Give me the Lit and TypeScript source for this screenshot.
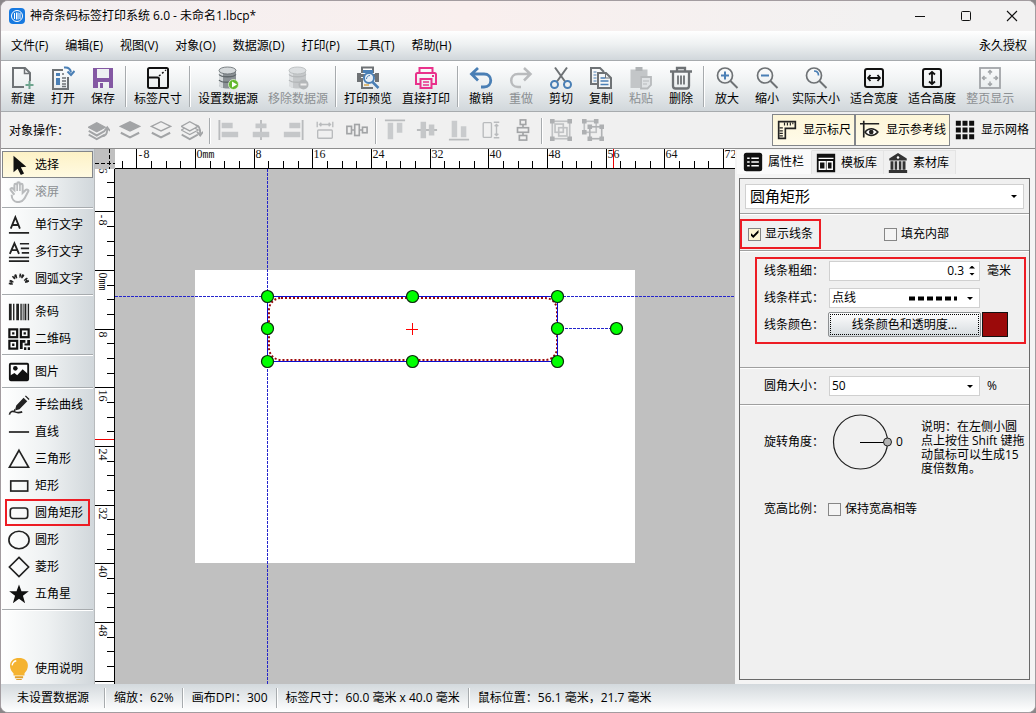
import { LitElement, html, svg, css, nothing } from "lit";
import { customElement, property } from "lit/decorators.js";
import { classMap } from "lit/directives/class-map.js";

/* Icons: each is drawn on a 24 x 24 grid. */
const G = "#6e7275";
const B = "#4a7fb5";
const L = "#b9bbbd";
const M = "#a2a4a6";

const cylinder = (a: string, b: string, c: string) => svg`
  <path d="M3 4v15c0 2 4 3.500 8.500 3.500S20 21 20 19V4z" fill=${b}/>
  <path d="M3 4v15c0 1.500 2 2.500 4 3V6z" fill=${a}/>
  <path d="M3 8.500c2 3 15 3 17 0M3 14c2 3 15 3 17 0" fill="none" stroke=${c} stroke-width="1.300"/>
  <ellipse cx="11.500" cy="4.500" rx="8.500" ry="3.500" fill=${a} stroke=${c} stroke-width=".8"/>`;

const layer = (y: number, fill: string) => svg`<path d="M1.500 ${y}L12 ${y - 5}L22.500 ${y}L12 ${y + 5}Z" fill=${fill} stroke=${M} stroke-width="1.400"/>`;
const chevron = (y: number) => svg`<path d="M2 ${y}L12 ${y + 5}L22 ${y}" fill="none" stroke=${M} stroke-width="2.200"/>`;

const icons: Record<string, unknown> = {
  new: svg`<g fill="none" stroke=${G} stroke-width="2"><path d="M13 21H2V2h12l5 5v8"/><path d="M13.500 2.500v5h5" stroke-width="1.500"/></g><path d="M18.500 15v8M14.500 19h8" stroke="#6fa58f" stroke-width="2"/>`,
  open: svg`<path d="M12 4H2v19h15V11" fill="none" stroke=${G} stroke-width="2"/><path d="M5 7h4v3H5zM5 12h4v7H5z" fill=${B}/><path d="M11 8h2M11 12h4M11 15h4M11 18h4M11 20.500h4" stroke=${G} stroke-width="1.500"/><path d="M13 1.500c4-.5 6.500 1.500 7 5" fill="none" stroke=${B} stroke-width="2"/><path d="M16.500 5.500L20 9l3.500-4" fill="none" stroke=${B} stroke-width="2"/>`,
  save: svg`<path d="M2 2h20v20H2z" fill="#8458a3"/><path d="M6 3h12v9H6z" fill="#eef0f2"/><path d="M7 16h11v6H7z" fill="#eef0f2"/><path d="M9 17h3v5H9z" fill="#8458a3"/>`,
  size: svg`<g fill="none" stroke="#111"><rect x="2" y="2" width="20" height="20" rx="1.500" stroke-width="2"/><path d="M2 11.500h9.500c1 0 1.500.5 1.500 1.500v9" stroke-width="2"/><path d="M13 10l7-6" stroke-width="1.500" stroke-dasharray="2 2"/></g>`,
  db: svg`${cylinder("#d5d9db", "#8b9195", "#5f6669")}<circle cx="17.500" cy="18.500" r="5" fill="#62b72c" stroke="#e7f6dc" stroke-width=".8"/><path d="M16 15.500l5 3-5 3z" fill="#fff"/>`,
  dbOff: svg`${cylinder("#dcdfe1", "#c5c8ca", "#b4b7b9")}<circle cx="17.500" cy="18.500" r="5" fill="#b4b7b9"/><path d="M14.500 18.500h6" stroke="#eee" stroke-width="2"/>`,
  preview: svg`<path d="M6 7V1.500h11V7" fill="#fff" stroke=${G} stroke-width="2"/><path d="M7 4h10v3H7z" fill=${B}/><path d="M1 7h4v9H1zM19 7h4v9h-4zM5 8h14v3H5z" fill=${G}/><path d="M6 12v10h11" fill="none" stroke=${G} stroke-width="2"/><path d="M8 19h5" stroke="#d8a74e" stroke-width="1.500"/><circle cx="13" cy="12" r="5" fill="#e7eef5" stroke=${B} stroke-width="2"/><path d="M10.500 13c0-2 1.500-3.500 3.500-3.500" fill="none" stroke=${B}/><path d="M16.500 16l6 6" stroke=${B} stroke-width="2.500"/>`,
  print: svg`<g fill="none" stroke="#e9318b" stroke-width="2"><path d="M5.500 6V2h13v4M6 18H2V8.500C2 7.500 2.500 7 3.500 7h17c1 0 1.500.5 1.500 1.500V18h-4"/><path d="M6.500 13h11v9h-11z"/><path d="M9 16h6M9 19h6" stroke-width="1.500"/><path d="M18 10h2"/></g>`,
  undo: svg`<path d="M9 2L2.500 8L9 14.500M3 8h12c9 0 9 13 0 13h-3" fill="none" stroke=${B} stroke-width="2.800"/>`,
  redo: svg`<path d="M15 2l6.500 6L15 14.500M21 8H9c-9 0-9 13 0 13h3" fill="none" stroke=${L} stroke-width="2.500"/>`,
  cut: svg`<path d="M6 1.500l10 14M18 1.500L8 15.500" stroke=${G} stroke-width="2"/><g fill="none" stroke=${B} stroke-width="2"><circle cx="5.500" cy="18.500" r="3.500"/><circle cx="18.500" cy="18.500" r="3.500"/></g>`,
  copy: svg`<path d="M8 18H2V2h9l4 4" fill="none" stroke=${G} stroke-width="2"/><path d="M4.500 6h3M4.500 9h3M4.500 12h3M4.500 15h3" stroke=${B}/><path d="M9 7h8l5 5v10H9z" fill="#f4f6f7" stroke=${G} stroke-width="2"/><path d="M11.500 12h5M11.500 15h8M11.500 18.500h8" stroke=${B} stroke-width="1.500"/><path d="M16.500 7v5H22" stroke=${G} fill="none"/>`,
  paste: svg`<path d="M1.500 3.500h17V10H11v12H1.500z" fill="#c3c6c8"/><path d="M6.500 1h7v4h-7z" fill="#b0b3b5"/><path d="M12 11h10v8l-3.500 3.500H12z" fill="#dfe2e4" stroke="#b7babc" stroke-width="1.800"/><path d="M14 15h6M14 18h4" stroke="#b7babc"/>`,
  del: svg`<g fill="none" stroke=${G} stroke-width="2.300"><path d="M1 5.500h22M8 5V2h8v3M4 6v14c0 1.500 1 2.500 2.500 2.500h11c1.500 0 2.500-1 2.500-2.500V6"/><path d="M9 9.500v9M12 9.500v9M15 9.500v9" stroke-width="1.800"/></g>`,
  zoomIn: svg`<circle cx="10" cy="9.500" r="7.500" fill="none" stroke=${G} stroke-width="1.700"/><path d="M15.500 15l7 7" stroke=${G} stroke-width="2"/><path d="M10 5.500v8M6 9.500h8" stroke=${B} stroke-width="2"/>`,
  zoomOut: svg`<circle cx="10" cy="9.500" r="7.500" fill="none" stroke=${G} stroke-width="1.700"/><path d="M15.500 15l7 7" stroke=${G} stroke-width="2"/><path d="M6 9.500h8" stroke=${B} stroke-width="2"/>`,
  actual: svg`<circle cx="10" cy="9.500" r="7.500" fill="none" stroke=${G} stroke-width="1.700"/><path d="M15.500 15l7 7" stroke=${G} stroke-width="2"/><path d="M10 5c3 0 4.500 2 4.500 4.500" fill="none" stroke=${B} stroke-width="1.700"/>`,
  fitW: svg`<rect x="3" y="3" width="18" height="18" rx="2" fill="none" stroke="#111" stroke-width="2"/><path d="M6 12h12M8.500 9L6 12l2.500 3M15.500 9l2.500 3-2.500 3" fill="none" stroke="#111" stroke-width="1.800"/>`,
  fitH: svg`<rect x="3" y="3" width="18" height="18" rx="2" fill="none" stroke="#111" stroke-width="2"/><path d="M12 6v12M9 8.500L12 6l3 2.500M9 15.500l3 2.500 3-2.500" fill="none" stroke="#111" stroke-width="1.800"/>`,
  fitAll: svg`<g fill="none" stroke="#a2a5a8"><rect x="2" y="2" width="20" height="20" stroke-width="1.800"/><path d="M12 4.500v4M12 15.500v4M4.500 12h4M15.500 12h4M10 6.500l2-2 2 2M10 17.500l2 2 2-2M6.500 10l-2 2 2 2M17.500 10l2 2-2 2" stroke-width="1.500"/></g>`,

  up1: svg`<g transform="translate(-1 0) scale(.88 1)">${chevron(17)}${chevron(13)}${layer(9, M)}</g><path d="M15 19c4 0 6-2 6-8M18 13l3-4 3 4" fill="none" stroke=${M} stroke-width="2"/>`,
  top: svg`${chevron(15)}${layer(8, M)}`,
  bottom: svg`${chevron(15)}${layer(8, "#f0f0f0")}`,
  down1: svg`<g transform="translate(-1 0) scale(.88 1)">${chevron(17)}${layer(12, "#f0f0f0")}${layer(8, "#f0f0f0")}</g><path d="M16 7c4 0 5 3 5 9M17.500 14l3.500 4 3-4" fill="none" stroke=${M} stroke-width="2"/>`,
  alL: svg`<path d="M1.500 1v22" stroke=${L} stroke-width="2"/><path d="M4 4h12v6H4zM4 14h18v6H4z" fill="#c5c7c9"/>`,
  alC: svg`<path d="M12 1v22" stroke=${L} stroke-width="2"/><path d="M6 5h12v5H6zM3 14h18v6H3z" fill="#c5c7c9"/>`,
  alR: svg`<path d="M22.500 1v22" stroke=${L} stroke-width="2"/><path d="M8 4h12v6H8zM2 14h18v6H2z" fill="#c5c7c9"/>`,
  eqW: svg`<g fill="none" stroke=${L} stroke-width="1.500"><path d="M3.500 3v6M20.500 3v6M6 6h12M8 4L6 6l2 2M16 4l2 2-2 2"/><rect x="4" y="12" width="16" height="9" rx="1"/></g>`,
  distH: svg`<g fill="none" stroke=${M} stroke-width="1.800"><rect x="1" y="8" width="5" height="8"/><rect x="9.500" y="6" width="5" height="12"/><rect x="18" y="9" width="5" height="6"/><path d="M6 12h3.500M14.500 12H18"/></g>`,
  alT: svg`<path d="M1 1.500h22" stroke=${L} stroke-width="2"/><path d="M4 4h6v18H4zM14 4h6v11h-6z" fill="#c9cbcd"/>`,
  alM: svg`<path d="M1 12h22" stroke=${L} stroke-width="2"/><path d="M5 3h6v18H5zM14 6h6v12h-6z" fill="#c5c7c9"/>`,
  alB: svg`<path d="M1 22.500h22" stroke=${L} stroke-width="2"/><path d="M4 2h6v18H4zM14 8h6v12h-6z" fill="#c9cbcd"/>`,
  eqH: svg`<g fill="none" stroke=${L} stroke-width="1.500"><rect x="3.500" y="4" width="9" height="16" rx="1"/><path d="M15 3.500h6M15 20.500h6M18 6v12M16 8l2-2 2 2M16 16l2 2 2-2"/></g>`,
  distV: svg`<g fill="none" stroke=${M} stroke-width="1.800"><rect x="9" y="1" width="6" height="5"/><rect x="6" y="9.500" width="12" height="5"/><rect x="8" y="18" width="8" height="5"/><path d="M12 6v3.500M12 14.500V18"/></g>`,
  group: svg`<g fill="none" stroke="#c0c2c4" stroke-width="1.800"><rect x="2.500" y="2.500" width="19" height="19"/><rect x="5.500" y="5.500" width="9" height="9"/><rect x="9.500" y="9.500" width="9" height="9"/></g><path d="M0 0h5v5H0zM19 0h5v5h-5zM0 19h5v5H0zM19 19h5v5h-5z" fill="#aeb0b2"/>`,
  ungroup: svg`<g fill="none" stroke="#c0c2c4" stroke-width="1.800"><rect x="2.500" y="2.500" width="13" height="12"/><rect x="8.500" y="8.500" width="13" height="13" stroke="#b0b2b4"/></g><path d="M0 0h5v5H0zM13 0h5v5h-5zM0 12h5v5H0zM6 6h5v5H6zM19 6h5v5h-5zM6 19h5v5H6zM19 19h5v5h-5z" fill="#aeb0b2"/>`,

  ruler: svg`<path d="M2 2h20v8H10v12H2z" fill="none" stroke="#222" stroke-width="2"/><path d="M9 3v3.500M12.500 3v3.500M16 3v3.500M19 3v2M3 9.500h4M3 13h4M3 16h4M3 19h4" stroke="#222" stroke-width="1.400"/>`,
  guide: svg`<path d="M0 4.500h23M4.500 1v20" stroke="#222" stroke-width="2"/><path d="M6 14.500c4-5.500 11-5.500 15.500 0-4.500 5.500-11.500 5.500-15.500 0z" fill="#fff" stroke="#222" stroke-width="1.800"/><circle cx="13.500" cy="14.500" r="2.800" fill="#222"/>`,
  grid: svg`<path d="M1 1h6v6H1zM9 1h6v6H9zM17 1h6v6H17zM1 9h6v6H1zM9 9h6v6H9zM17 9h6v6H17zM1 17h6v6H1zM9 17h6v6H9zM17 17h6v6H17z" fill="#111"/>`,

  arrow: svg`<path d="M6 2v18l4.500-4 3.500 7 3.500-1.700L14 14.500l6-.5z" fill="#111"/>`,
  hand: svg`<path d="M7 15L3 10c-1-2 1-3 2.500-1.500L7 10V4.500c0-2 2.500-2 3 0V3c0-2 3-2 3 0v1.500c0-2 3-2 3 0V13l3-3c2-1.500 4 0 3 1.500L18 19c-2 3-4 4-7 4-4 0-7-3-7-8" fill="none" stroke=${L} stroke-width="2.200"/><path d="M10 4v7M13 4v7" stroke=${L} stroke-width="1.800"/>`,
  text1: svg`<path d="M3 16L8 3.500 13 16M5 12h6" fill="none" stroke="#222" stroke-width="2"/><path d="M1 20.500h22" stroke="#222" stroke-width="2"/>`,
  textN: svg`<path d="M2 14L7 2.500 12 14M4 10h6" fill="none" stroke="#222" stroke-width="2"/><path d="M13 3h10M14 8h9M15 13h8M1 18h22M1 22h22" stroke="#222" stroke-width="1.800"/>`,
  textArc: svg`<path d="M3 18C4.500 5 19.500 5 21.500 18" fill="none" stroke="#222" stroke-width="4.500" stroke-dasharray="1.500 1 2 3"/><path d="M3 18C4.500 5 19.500 5 21.500 18" fill="none" stroke="#222" stroke-width="1.500" stroke-dasharray="4.500 3"/>`,
  barcode: svg`<path d="M1 3h3v18H1zM5.500 3H7v18H5.500zM9 3h3v18H9zM13.500 3H15v18h-1.500zM16 3h1v18h-1zM18 3h2v18h-2zM21.500 3H23v18h-1.500z" fill="#222"/>`,
  qr: svg`<g fill="none" stroke="#111" stroke-width="2.400"><rect x="1.500" y="1.500" width="8.500" height="8.500"/><rect x="14" y="1.500" width="8.500" height="8.500"/><rect x="1.500" y="14" width="8.500" height="8.500"/></g><path d="M4.500 4.500h2.500v2.500H4.500zM17 4.500h2.500v2.500H17zM4.500 17h2.500v2.500H4.500zM13 13h6v3h-3v7h-3zM21 13h3v6h-6v-2h3zM17.500 21H20v3h-2.500zM21.500 21H24v3h-2.500z" fill="#111"/>`,
  image: svg`<rect x="2" y="3" width="20" height="18" rx="1" fill="#fff" stroke="#111" stroke-width="2"/><path d="M2 16l5-3 3 2.500L16 9l6 5.500V21H2z" fill="#111"/><circle cx="8" cy="8" r="2.500" fill="#111"/>`,
  pen: svg`<path d="M17 4l4 4-8.500 8.500-5 1.500 1.500-5.500zM18.500 2.500l1-1 4 4-1 1zM6 19l3-1-2-2z" fill="#222"/><path d="M1.500 22.500c1-4 4-4 6-3s5 1 8 0" fill="none" stroke="#222" stroke-width="1.800"/>`,
  line: svg`<path d="M1 12h22" stroke="#333" stroke-width="2"/>`,
  triangle: svg`<path d="M12 2.500L22.500 21H1.500z" fill="none" stroke="#222" stroke-width="1.800"/>`,
  rect: svg`<rect x="3" y="6.500" width="18.500" height="11" fill="none" stroke="#222" stroke-width="1.800"/>`,
  rrect: svg`<rect x="2.500" y="6.500" width="19" height="11.500" rx="3" fill="none" stroke="#222" stroke-width="1.800"/>`,
  circle: svg`<ellipse cx="12" cy="12" rx="11" ry="9.500" fill="none" stroke="#222" stroke-width="1.800"/>`,
  diamond: svg`<path d="M12 1.500l10.500 10.500-10.500 10.500L1.500 12z" fill="none" stroke="#222" stroke-width="1.800"/>`,
  star: svg`<path d="M12 1.500l2.700 7.500h8l-6.400 4.800L18.700 22 12 17.200 5.300 22l2.400-8.200L1.300 9h8z" fill="#111"/>`,
  bulb: svg`<path d="M12 0c12 0 11.500 12 6 16.500V19H6v-2.500C.5 12 0 0 12 0z" fill="#f5b330"/><path d="M4.500 8c.5-3 2-4.500 4.500-5" fill="none" stroke="#fff" stroke-width="1.500"/><path d="M7.500 20h9v2h-9zM9 23h6v1H9z" fill="#e2a02a"/>`,

  list: svg`<rect x="1" y="1" width="22" height="22" rx="3" fill="#111"/><path d="M5 7.500h3M10 7.500h9M5 12h3M10 12h9M5 16.500h3M10 16.500h9" stroke="#fff" stroke-width="2"/>`,
  template: svg`<path d="M1 1h22v22H1z" fill="#111"/><path d="M3 6.500h18" stroke="#fff" stroke-width="1.500"/><path d="M4 10.500h7v9H4zM13.500 10.500h6v9h-6z" fill="#111" stroke="#fff" stroke-width="1.700"/>`,
  bank: svg`<path d="M12 0l10.500 6.500V9h-21V6.500zM1 20.500h22V24H1zM3 10h3.500v10H3zM8 10h3v10H8zM13 10h3v10h-3zM17.500 10H21v10h-3.500z" fill="#333"/><circle cx="12" cy="5.500" r="1.500" fill="#fff"/>`,
};

@customElement("lb-icon")
class LbIcon extends LitElement {
  @property() name = "";
  @property({ type: Number }) size = 24;
  static styles = css`
    :host { display: block; flex: none; line-height: 0; }
    svg { display: block; }
  `;
  render() {
    return html`<svg width=${this.size} height=${this.size} viewBox="0 0 24 24" aria-hidden="true">${icons[this.name]}</svg>`;
  }
}

/* Scale of the work area: pixels for one millimetre at the current zoom. */
const MM = 440 / 60;
const MAJOR = 8;
const ORIGIN_X = 80;
const ORIGIN_Y = 101;

@customElement("lb-workspace")
class LbWorkspace extends LitElement {
  static styles = css`
    :host { display: grid; grid-template-columns: 20px 1fr; grid-template-rows: 20px 1fr; min-width: 0; background: #c0c0c0; }
    svg { display: block; width: 100%; height: 100%; min-width: 0; min-height: 0; overflow: hidden; }
    .fill { position: relative; min-width: 0; min-height: 0; background: #fff; overflow: hidden; }
    .fill svg { position: absolute; inset: 0; }
    .corner, .canvas { background: #c0c0c0; }
    .num { font: 12px "Liberation Serif", serif; fill: #111; }
    .unit { font: 10px "Liberation Mono", monospace; }
    .tick { stroke: #000; stroke-width: 1; shape-rendering: crispEdges; }
    .mark { stroke: #e00; shape-rendering: crispEdges; }
    .guide { stroke: #2424cc; stroke-dasharray: 3 1; shape-rendering: crispEdges; }
    .edge { stroke: #0d0dd0; fill: none; shape-rendering: crispEdges; }
    .shape { stroke: #9d0808; stroke-width: 2; stroke-dasharray: 2 2; fill: none; }
    .handle { fill: #00ff00; stroke: #0a2a0a; stroke-width: 1.2; }
  `;

  private ticks(origin: number, from: number, to: number, horizontal: boolean) {
    const out = [];
    for (let mm = from; mm <= to; mm += 2) {
      const p = Math.round(origin + mm * MM) + 0.5;
      const major = mm % MAJOR === 0;
      const start = major ? 0 : 12;
      out.push(horizontal
        ? svg`<line class="tick" x1=${p} x2=${p} y1=${start} y2="20"/>`
        : svg`<line class="tick" y1=${p} y2=${p} x1=${start} x2="20"/>`);
      if (major) {
        const label = svg`${mm < 0 ? svg`<tspan class="unit">-</tspan>` : nothing}${Math.abs(mm)}${mm === 0 ? svg`<tspan class="unit">mm</tspan>` : nothing}`;
        out.push(horizontal
          ? svg`<text class="num" x=${p + 1} y="9">${label}</text>`
          : svg`<text class="num" transform="translate(4 ${p + 2}) rotate(90)">${label}</text>`);
      }
    }
    return out;
  }

  render() {
    const handles = [[152, 127], [297, 127], [442, 127], [152, 159], [442, 159], [501, 159], [152, 192], [297, 192], [442, 192]];
    return html`
      <div class="fill corner"><svg><path d="M0 14.500h20M14.500 0v20" stroke="#000" stroke-dasharray="4 2"/></svg></div>
      <div class="fill"><svg>
        ${this.ticks(ORIGIN_X, -10, 72, true)}
        <line class="tick" x1="0" x2="100%" y1="19.500" y2="19.500"/>
        <line class="mark" x1="498.500" x2="498.500" y1="0" y2="19"/>
      </svg></div>
      <div class="fill"><svg>
        ${this.ticks(ORIGIN_Y, -16, 56, false)}
        <line class="tick" x1="19.500" x2="19.500" y1="0" y2="100%"/>
        <line class="mark" y1="270.500" y2="270.500" x1="0" x2="19"/>
      </svg></div>
      <div class="fill canvas"><svg>
        <rect x=${ORIGIN_X} y=${ORIGIN_Y} width="440" height="293" fill="#fff"/>
        <line class="guide" x1="152.500" x2="152.500" y1="0" y2="100%"/>
        <line class="guide" x1="0" x2="100%" y1="127.500" y2="127.500"/>
        <line class="guide" x1="442" x2="501" y1="159.500" y2="159.500"/>
        <rect class="shape" x="154" y="129" width="288" height="62" rx="12"/>
        <rect class="edge" x="152.500" y="127.500" width="290" height="65"/>
        <path d="M291 160.500h12M297.500 154v12" stroke="#f00" shape-rendering="crispEdges"/>
        ${handles.map(([x, y]) => svg`<circle class="handle" cx=${x + 0.5} cy=${y + 0.5} r="6"/>`)}
      </svg></div>`;
  }
}

type Tool = { icon: string; label: string; off?: boolean };
const t = (icon: string, label: string, off = false): Tool => ({ icon, label, off });

const MENUS = ["文件(F)", "编辑(E)", "视图(V)", "对象(O)", "数据源(D)", "打印(P)", "工具(T)", "帮助(H)"];
const TOOLBAR: Tool[][] = [
  [t("new", "新建"), t("open", "打开"), t("save", "保存")],
  [t("size", "标签尺寸")],
  [t("db", "设置数据源"), t("dbOff", "移除数据源", true)],
  [t("preview", "打印预览"), t("print", "直接打印")],
  [t("undo", "撤销"), t("redo", "重做", true), t("cut", "剪切"), t("copy", "复制"), t("paste", "粘贴", true), t("del", "删除")],
  [t("zoomIn", "放大"), t("zoomOut", "缩小"), t("actual", "实际大小"), t("fitW", "适合宽度"), t("fitH", "适合高度"), t("fitAll", "整页显示", true)],
];
const OBJECT_OPS = [
  ["up1", "top", "bottom", "down1"],
  ["alL", "alC", "alR", "eqW", "distH"],
  ["alT", "alM", "alB", "eqH", "distV"],
  ["group", "ungroup"],
];
const SIDE: Tool[][] = [
  [t("arrow", "选择"), t("hand", "滚屏", true)],
  [t("text1", "单行文字"), t("textN", "多行文字"), t("textArc", "圆弧文字")],
  [t("barcode", "条码"), t("qr", "二维码")],
  [t("image", "图片")],
  [t("pen", "手绘曲线"), t("line", "直线"), t("triangle", "三角形"), t("rect", "矩形"), t("rrect", "圆角矩形"), t("circle", "圆形"), t("diamond", "菱形"), t("star", "五角星")],
];
const STATUS = ["未设置数据源", "缩放：62%", "画布DPI：300", "标签尺寸：60.0 毫米 x 40.0 毫米", "鼠标位置：56.1 毫米，21.7 毫米"];

const controls = css`
  * { box-sizing: border-box; }
  button, input, select { font: inherit; color: inherit; margin: 0; padding: 0; border: 0; border-radius: 0; background: none; outline: 0; }
  button { white-space: nowrap; }
`;

@customElement("lb-properties")
class LbProperties extends LitElement {
  static styles = [controls, css`
    :host { display: flex; flex-direction: column; padding: 1px 5px 4px 2px; background: #f4f4f4; min-width: 0; }
    .tabs { display: flex; height: 24px; }
    .tab { display: flex; align-items: center; gap: 5px; padding: 0 6px 0 4px; background: #f0f0f0; border: 1px solid #e4e4e4; border-width: 1px 1px 0 0; }
    .tab.on { background: #fafafa; padding: 0 7px 2px 6px; border-top-color: #fafafa; }
    .page { flex: 1; margin: 4px 0 0 2px; border: 1px solid #696969; background: #f0f0f0; }
    .row { display: flex; align-items: center; }
    .divide { border-bottom: 1px solid #9f9f9f; box-shadow: 0 1px 0 #fff; }
    .kind { height: 35px; padding: 0 5px; }
    .checks { height: 37px; padding-top: 4px; gap: 63px; }
    .note { border: 2px solid #ed1c24; }
    .tick { display: flex; align-items: center; gap: 4px; }
    .checks .note { height: 30px; padding: 0 6px; }
    input[type="checkbox"] { appearance: none; width: 13px; height: 13px; border: 1px solid #868686; background: #f4f4f4; display: grid; place-items: center; }
    input[type="checkbox"]:checked { background: #fdf5d3; }
    input[type="checkbox"]:checked::before { content: ""; width: 8px; height: 8px; background: #000; clip-path: polygon(0 35%, 35% 65%, 100% 0, 100% 35%, 35% 100%, 0 65%); }
    .box { position: relative; width: 151px; height: 20px; background: #fff; border: 1px solid #d0d0d0; display: flex; }
    .kind .box { width: auto; flex: 1; height: 25px; font-size: 15px; }
    .box select, .box input { appearance: none; flex: 1; width: 100%; min-width: 0; padding: 0 1px 0 2px; }
    .kind select { padding-left: 4px; }
    .drop::after { content: ""; position: absolute; right: 6px; top: 50%; margin-top: -1px; border: 3px solid transparent; border-top-color: #000; border-bottom: 0; pointer-events: none; }
    .dash { position: absolute; right: 22px; top: 7px; pointer-events: none; }
    .spin input { text-align: right; }
    .steps { display: flex; flex-direction: column; justify-content: space-around; width: 14px; padding: 2px 0; }
    .steps button { width: 6px; height: 3px; margin-left: 4px; background: #000; clip-path: polygon(50% 0, 100% 100%, 0 100%); }
    .steps .dn { clip-path: polygon(0 0, 100% 0, 50% 100%); }
    .area { height: 117px; padding: 6px 3px 0 15px; }
    .group { height: 87px; display: grid; grid-template-rows: repeat(3, 23px); align-content: start; row-gap: 4px; padding: 0 0 0 7px; }
    .group .row, .field { gap: 7px; }
    .label { width: 58px; white-space: nowrap; }
    .paint { display: flex; align-items: center; margin-left: -1px; gap: 1px; }
    .paint button { width: 153px; height: 25px; border: 1px solid #8c8f91; border-radius: 2px; padding: 1px; background: linear-gradient(#fdfdfd, #d6dbdf); }
    .paint span { display: block; border: 1px dotted #000; line-height: 19px; }
    .paint i { width: 26px; height: 25px; background: #9b0a0a; border: 1px solid #111; }
    .field { padding-left: 24px; }
    .radius { height: 37px; }
    .turn { height: 74px; gap: 0; }
    .turn .angle { margin-left: 2px; }
    .turn p { flex: none; margin: 11px 0 0 18px; line-height: 14px; width: 107px; }
    .ratio { height: 60px; gap: 6px; }
    .dial { flex: none; display: block; margin-left: 10px; }
  `];
  render() {
    return html`
      <div class="tabs" role="tablist">
        <button class="tab on" role="tab"><lb-icon name="list" size="20"></lb-icon>属性栏</button>
        <button class="tab" role="tab"><lb-icon name="template" size="20"></lb-icon>模板库</button>
        <button class="tab" role="tab"><lb-icon name="bank" size="20"></lb-icon>素材库</button>
      </div>
      <div class="page">
        <div class="row kind divide"><div class="box drop"><select aria-label="对象"><option>圆角矩形</option></select></div></div>
        <div class="row checks divide">
          <label class="tick note"><input type="checkbox" checked>显示线条</label>
          <label class="tick"><input type="checkbox">填充内部</label>
        </div>
        <div class="area divide">
          <div class="group note">
            <div class="row"><label class="label" for="w">线条粗细：</label>
              <div class="box spin"><input id="w" type="text" value="0.3"><div class="steps"><button aria-label="+"></button><button class="dn" aria-label="-"></button></div></div>毫米</div>
            <div class="row"><label class="label" for="s">线条样式：</label>
              <div class="box drop"><select id="s"><option>点线</option></select>
                <svg class="dash" width="48" height="5"><path d="M0 2.500h48" stroke="#000" stroke-width="4" stroke-dasharray="6 3"/></svg></div></div>
            <div class="row"><label class="label" for="c">线条颜色：</label>
              <div class="paint"><button id="c"><span>线条颜色和透明度...</span></button><i></i></div></div>
          </div>
        </div>
        <div class="row field radius divide"><label class="label" for="r">圆角大小：</label>
          <div class="box drop"><select id="r"><option>50</option></select></div>%</div>
        <div class="row field turn"><span class="label">旋转角度：</span>
          <svg class="dial" width="62" height="58" role="img" aria-label="0"><circle cx="28.500" cy="29" r="27" fill="none" stroke="#222" stroke-width="1.200"/><path d="M28 29.500h24" stroke="#000"/><circle cx="55.500" cy="29" r="4" fill="#b4b4b4" stroke="#222"/></svg>
          <span class="angle">0</span>
          <p>说明：在左侧小圆点上按住 Shift 键拖动鼠标可以生成15度倍数角。</p></div>
        <div class="row field ratio"><span class="label">宽高比例：</span>
          <label class="tick"><input type="checkbox">保持宽高相等</label></div>
      </div>`;
  }
}

@customElement("app-root")
class AppRoot extends LitElement {
  static styles = [controls, css`
    :host { display: flex; flex-direction: column; height: 100vh; box-sizing: border-box; overflow: hidden; color: #000; font: 12px/18px "Open Sans", "Noto Sans CJK SC", sans-serif; background: #8b8789; }
    .window { flex: 1; min-height: 0; display: flex; flex-direction: column; border: 1px solid #a39ca0; border-radius: 8px; overflow: hidden; background: #f0f0f0; }
    .title { display: flex; align-items: center; height: 30px; padding-left: 8px; background: linear-gradient(90deg, #f3f0f1, #f9efee 45%, #f2f1f1 85%); }
    .title .name { flex: 1; margin-left: 5px; }
    .title button { width: 46px; height: 30px; display: grid; place-items: center; }
    .bar { background: linear-gradient(#fff, #eef1f2 45%, #d1d7db); }
    .menu { display: flex; align-items: center; gap: 1px; height: 30px; padding: 0 8px 0 2px; border-bottom: 1px solid #a7abae; }
    .menu button { padding: 0 8px; }
    .menu .spring { flex: 1; }
    .menu .licence { padding: 0; }
    .tools { display: flex; height: 51px; padding-left: 2px; border-bottom: 1px solid #a7abae; }
    .tools button { flex: none; min-width: 40px; padding: 5px 5px 0; display: flex; flex-direction: column; align-items: center; }
    .off { color: #8c9093; }
    .sep { flex: none; width: 2px; margin: 5px 2px 4px; background: linear-gradient(90deg, #a7abae 50%, #fff 50%); }
    .ops { display: flex; align-items: center; height: 37px; padding-left: 8px; border-bottom: 1px solid #8e8e8e; }
    .ops .cap { width: 74px; padding-top: 2px; white-space: nowrap; }
    .ops .op { width: 32px; height: 32px; display: grid; place-items: center; }
    .ops .order { width: 31px; }
    .ops .sep { height: 26px; }
    .ops .spring { flex: 1; }
    .toggle { display: flex; align-items: center; gap: 6px; height: 32px; padding: 0 3px 0 4px; border: 1px solid transparent; }
    .toggle.on { border-color: #83868a; background: linear-gradient(#fdf6d8, #fffbea); }
    .toggle:last-child { margin-right: 2px; }
    .body { flex: 1; min-height: 0; display: grid; grid-template-columns: 94px 1fr 300px; }
    .side { display: flex; flex-direction: column; padding: 2px 1px; background: linear-gradient(90deg, #fff, #eef1f2 50%, #d1d7db); border-right: 1px solid #b7babc; }
    .side button { height: 27px; display: flex; align-items: center; gap: 5px; padding-left: 5px; border: 1px solid transparent; }
    .side .on { border-color: #83868a; background: linear-gradient(#fdf2c6, #fffae2); }
    .side .rule { height: 2px; margin: 2px 0; background: linear-gradient(#a7abae 50%, #fff 50%); }
    .side .marked { border: 2px solid #ed1c24; padding-left: 1px; margin: 0 3px; }
    .side .spring { flex: 1; }
    .status { display: flex; align-items: center; height: 28px; padding-left: 8px; background: linear-gradient(#d3d9dd, #fff); }
    .status span { padding: 0 8px; white-space: nowrap; }
    .status span:first-child { padding-right: 15px; }
    .status .sep { height: 20px; margin: 0; }
  `];

  render() {
    const sep = html`<div class="sep"></div>`;
    return html`<div class="window">
      <header class="title">
        <svg width="16" height="16" viewBox="0 0 16 16"><rect width="16" height="16" rx="4" fill="#1779e0"/><circle cx="8" cy="8" r="5.500" fill="none" stroke="#fff"/><path d="M5.500 5v6M7.500 4.500v7M9 4.500v7M11 5v6" stroke="#fff"/></svg>
        <span class="name">神奇条码标签打印系统 6.0 - 未命名1.lbcp*</span>
        <button aria-label="最小化"><svg width="12" height="12"><path d="M1 6.500h10" stroke="#111"/></svg></button>
        <button aria-label="最大化"><svg width="12" height="12"><rect x="1.500" y="1.500" width="9" height="9" rx="1" fill="none" stroke="#111"/></svg></button>
        <button aria-label="关闭"><svg width="12" height="12"><path d="M1 1l10 10M11 1L1 11" stroke="#111" stroke-width="1.100"/></svg></button>
      </header>
      <nav class="menu bar">${MENUS.map((m) => html`<button>${m}</button>`)}<span class="spring"></span><button class="licence">永久授权</button></nav>
      <div class="tools bar">${TOOLBAR.map((g, i) => html`${i ? sep : nothing}${g.map((b) => html`<button class=${classMap({ off: !!b.off })}><lb-icon name=${b.icon}></lb-icon>${b.label}</button>`)}`)}</div>
      <div class="ops"><span class="cap">对象操作：</span>
        ${OBJECT_OPS.map((g, i) => html`${i ? sep : nothing}${g.map((n) => html`<button class=${classMap({ op: true, order: i === 0 })} aria-label=${n}><lb-icon name=${n} size="22"></lb-icon></button>`)}`)}
        <span class="spring"></span>
        <button class="toggle on"><lb-icon name="ruler" size="20"></lb-icon>显示标尺</button>
        <button class="toggle on"><lb-icon name="guide" size="20"></lb-icon>显示参考线</button>
        <button class="toggle"><lb-icon name="grid" size="20"></lb-icon>显示网格</button>
      </div>
      <main class="body">
        <div class="side">
          ${SIDE.map((g, i) => html`${i ? html`<div class="rule"></div>` : nothing}${g.map((b) => html`<button class=${classMap({ off: !!b.off, on: b.icon === "arrow", marked: b.icon === "rrect" })}><lb-icon name=${b.icon} size="22"></lb-icon>${b.label}</button>`)}`)}
          <div class="rule"></div>
          <span class="spring"></span>
          <button><lb-icon name="bulb" size="22"></lb-icon>使用说明</button>
        </div>
        <lb-workspace></lb-workspace>
        <lb-properties></lb-properties>
      </main>
      <footer class="status">${STATUS.map((s, i) => html`${i ? sep : nothing}<span>${s}</span>`)}</footer>
    </div>`;
  }
}
